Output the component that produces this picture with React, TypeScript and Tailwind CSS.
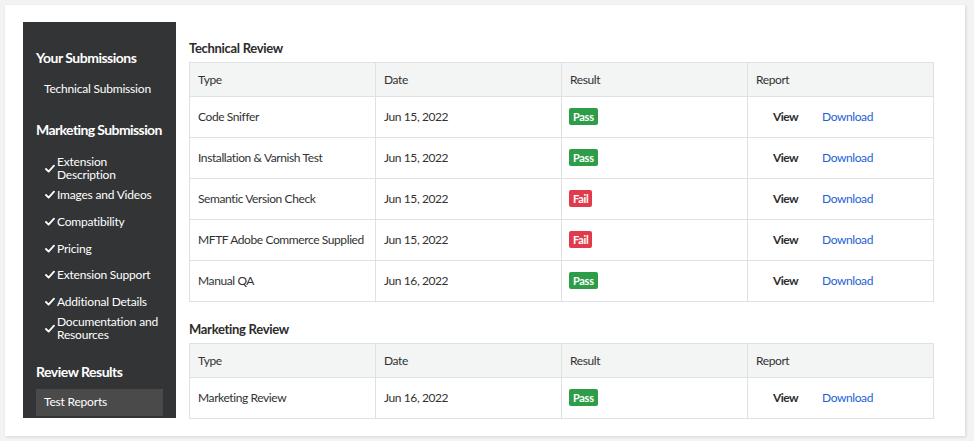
import React from 'react';

const font = { fontFamily: 'Lato, "Open Sans", sans-serif' };

const technical = [
  { type: 'Code Sniffer', date: 'Jun 15, 2022', pass: true },
  { type: 'Installation & Varnish Test', date: 'Jun 15, 2022', pass: true },
  { type: 'Semantic Version Check', date: 'Jun 15, 2022', pass: false },
  { type: 'MFTF Adobe Commerce Supplied', date: 'Jun 15, 2022', pass: false },
  { type: 'Manual QA', date: 'Jun 16, 2022', pass: true },
];

const marketing = [{ type: 'Marketing Review', date: 'Jun 16, 2022', pass: true }];

const marketingItems = [
  'Extension Description',
  'Images and Videos',
  'Compatibility',
  'Pricing',
  'Extension Support',
  'Additional Details',
  'Documentation and Resources',
];

function Check() {
  return (
    <svg width="10" height="9" viewBox="0 0 10 9" className="shrink-0">
      <path d="M1 5 L3.6 7.6 L9 1.6" fill="none" stroke="#ffffff" strokeWidth="1.8" strokeLinecap="round" strokeLinejoin="round" />
    </svg>
  );
}

function Badge({ pass }: { pass: boolean }) {
  return (
    <span
      className={`inline-flex items-center h-[17px] px-[4px] rounded-[2px] text-[11px] font-bold text-white leading-none tracking-[-0.3px] ${
        pass ? 'bg-[#2d9d48]' : 'bg-[#e03a4c]'
      }`}
    >
      {pass ? 'Pass' : 'Fail'}
    </span>
  );
}

function ReviewTable({ title, rows }: { title: string; rows: typeof technical }) {
  return (
    <div>
      <h3 className="text-[13px] font-bold text-[#2c2c2c] h-[20px] leading-[20px] mb-[4px] tracking-[-0.3px]">{title}</h3>
      <table className="w-[745px] table-fixed border-collapse text-[12px] text-[#323232] tracking-[-0.4px]">
        <thead>
          <tr className="bg-[#f3f4f4] h-[34px]">
            {['Type', 'Date', 'Result', 'Report'].map((h) => (
              <th key={h} className="border border-[#dfe1e3] text-left font-normal pl-[8px]">
                {h}
              </th>
            ))}
          </tr>
        </thead>
        <tbody>
          {rows.map((r, i) => (
            <tr key={i} className="h-[41px]">
              <td className="border border-[#dfe1e3] pl-[8px]">{r.type}</td>
              <td className="border border-[#dfe1e3] pl-[8px]">{r.date}</td>
              <td className="border border-[#dfe1e3] pl-[7px]">
                <Badge pass={r.pass} />
              </td>
              <td className="border border-[#dfe1e3] pl-[25px]">
                <span className="font-bold text-[#2c2c2c] inline-block w-[49px] tracking-[-0.6px]">View</span>
                <span className="text-[#1f5fd6]">Download</span>
              </td>
            </tr>
          ))}
        </tbody>
      </table>
    </div>
  );
}

export default function App() {
  return (
    <div className="w-[974px] h-[441px] bg-[#f3f3f3] p-[5px] pr-[9px]" style={font}>
      <div className="bg-white h-[431px] shadow-[1px_1px_3px_rgba(0,0,0,0.12)] flex pt-[17px] pl-[18px] pb-[18px]">
        <aside className="w-[153px] shrink-0 bg-[#333435] text-white pl-[13px] pr-[6px] pt-[26px] tracking-[-0.2px]">
          <h2 className="text-[14px] font-bold leading-[20px] whitespace-nowrap tracking-[-0.5px]">Your Submissions</h2>
          <div className="text-[12px] pl-[8px] mt-[13px] leading-[16px] whitespace-nowrap">Technical Submission</div>
          <h2 className="text-[14px] font-bold leading-[20px] mt-[23px] whitespace-nowrap tracking-[-0.6px]">Marketing Submission</h2>
          <ul className="mt-[15px] text-[12px] pl-[9px]">
            {marketingItems.map((m) => (
              <li key={m} className="flex items-center gap-[2px] leading-[13px] min-h-[26.67px]">
                <Check />
                <span className="max-w-[104px]">{m}</span>
              </li>
            ))}
          </ul>
          <h2 className="text-[14px] font-bold leading-[20px] mt-[20px] whitespace-nowrap tracking-[-0.5px]">Review Results</h2>
          <div className="mt-[7px] mr-[7px] bg-[#4a4a4a] h-[27px] flex items-center pl-[8px] text-[12px]">Test Reports</div>
        </aside>
        <main className="ml-[13px] pt-[16px] flex flex-col gap-[17px]">
          <ReviewTable title="Technical Review" rows={technical} />
          <ReviewTable title="Marketing Review" rows={marketing} />
        </main>
      </div>
    </div>
  );
}
